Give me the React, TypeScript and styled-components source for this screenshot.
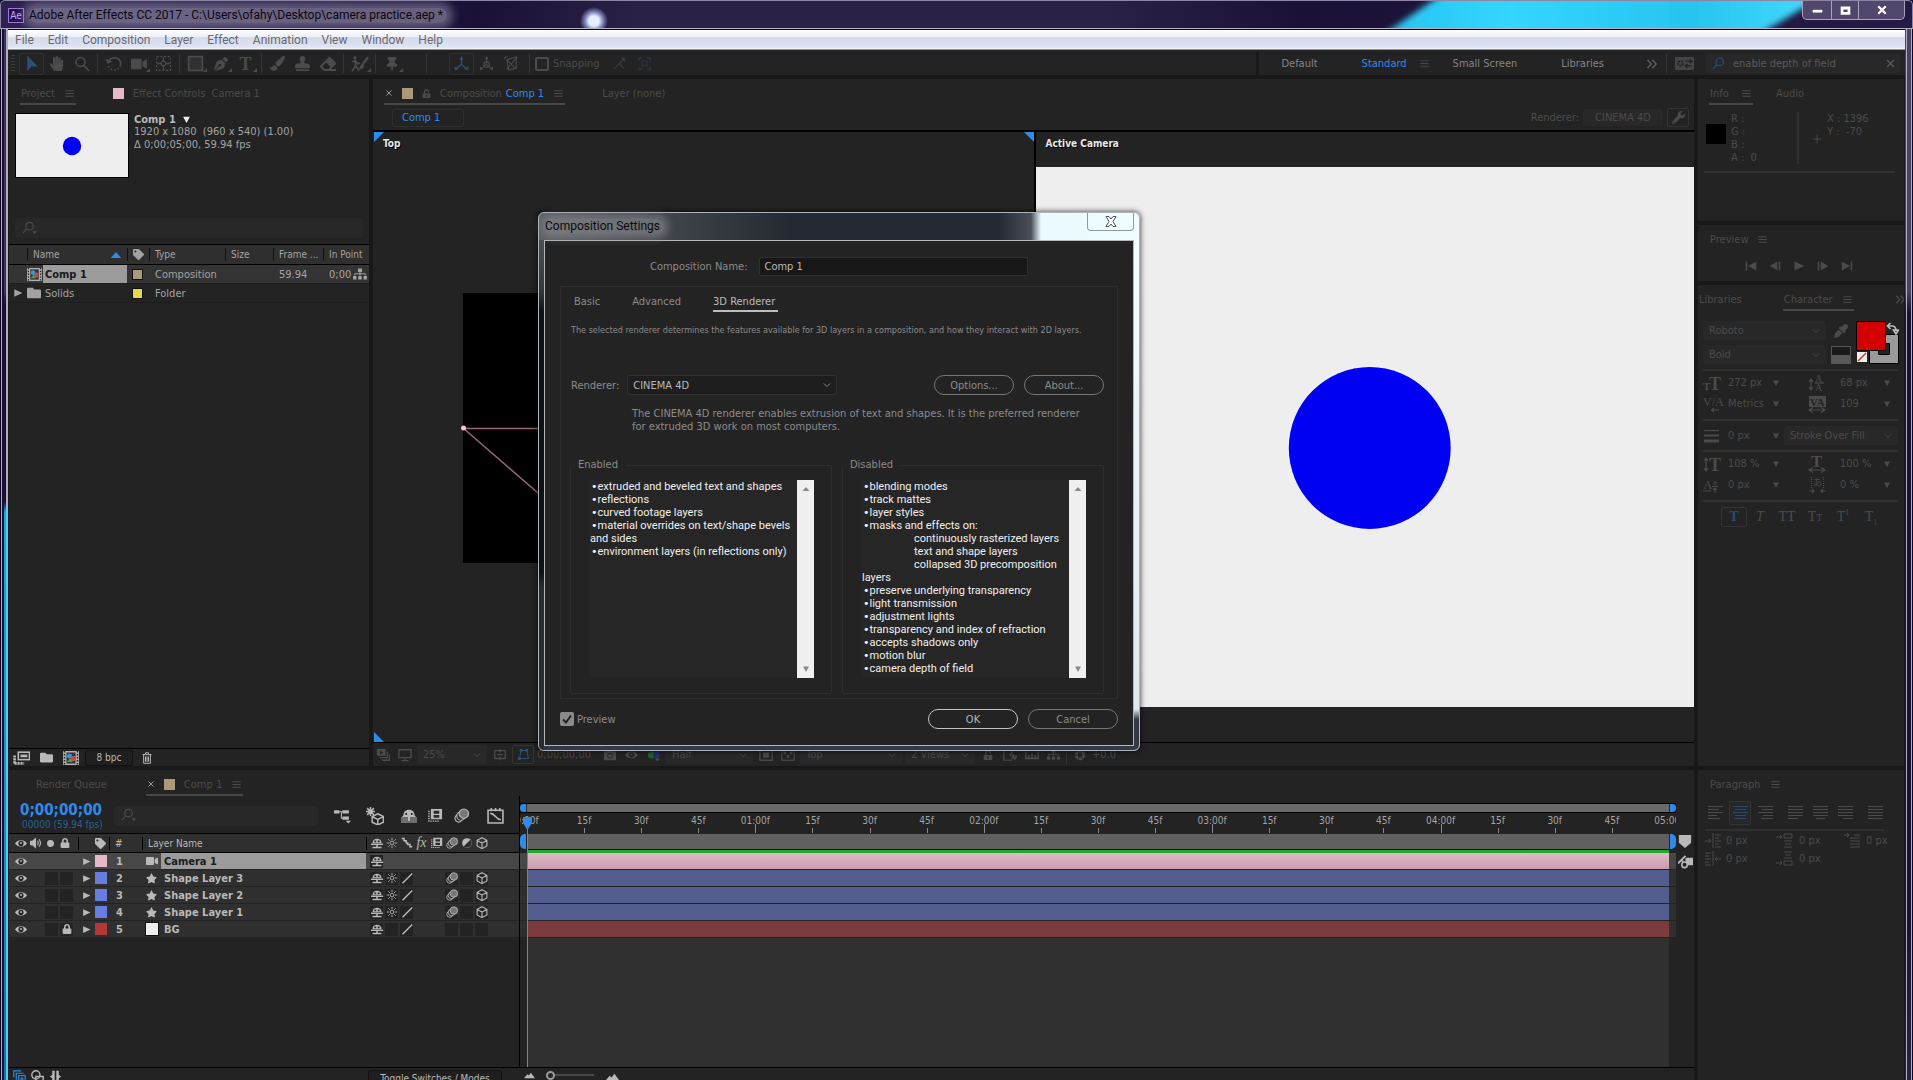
import React from 'react';
import styled, { createGlobalStyle, css } from 'styled-components';
import {
  FaHandPaper, FaPenNib, FaPaintBrush, FaStamp, FaEraser, FaThumbtack, FaVideo, FaWrench,
  FaEyeDropper, FaStar, FaLock, FaUnlockAlt, FaTag, FaFolder, FaCamera, FaSitemap,
} from 'react-icons/fa';

const c = {
  panel: '#232323',
  gap: '#181818',
  raised: '#2f2f2f',
  dim: '#4b4b4b',
  text: '#a3a3a3',
  bright: '#b9b9b9',
  blue: '#2d8ceb',
};

const Global = createGlobalStyle`
  * { box-sizing: border-box; }
  html, body, #root { height: 100%; }
  body { margin: 0; overflow: hidden; background: #120b24; color: ${c.text};
    font: 11px/13px "DejaVu Sans Condensed", "DejaVu Sans", sans-serif; }
  button, input, select { font: inherit; color: inherit; }
  button { background: none; border: 0; padding: 0; }
  svg { display: block; flex: none; }
  table { border-collapse: collapse; table-layout: fixed; }
  td, th { padding: 0; font-weight: inherit; text-align: left; }
  thead { font-weight: normal; }
`;

/* ---------- icons ---------- */

const line = { fill: 'none', stroke: 'currentColor', strokeWidth: 1.2 };
const shapes: Record<string, React.ReactNode> = {
  cursor: <path d="M4 0.5V15l4-4.2h6z" fill="currentColor" />,
  zoom: <g {...line} strokeWidth={1.5}><circle cx="6.5" cy="6" r="4.5" /><path d="M9.7 9.3 15 15" /></g>,
  find: <g {...line}><circle cx="8" cy="5.5" r="4" /><path d="M5 8.5 1 13" /><path d="M11 11h5l-2.5 3z" fill="currentColor" stroke="none" /></g>,
  findBlue: <g {...line} strokeWidth={1.6}><circle cx="9.5" cy="6" r="4.5" /><path d="M6.3 9.2 1.5 14.5" /></g>,
  rotate: <g {...line} strokeWidth={1.5}><path d="M3 7.5A6 6 0 0 1 14.3 6 6 6 0 0 1 14 11" /><path d="M13 12.5A6 6 0 0 1 3 9.5" strokeDasharray="1.5 1.8" /><path d="M.5 3.5 2.5 8.5 7 6z" fill="currentColor" stroke="none" /></g>,
  panBehind: <g {...line}><rect x="1.5" y="1.5" width="13" height="13" strokeDasharray="2 1.5" /><path d="M8 2v12M2 8h12" strokeDasharray="4 4" /><path d="M8 4 6 6.5h4zM8 12 6 9.5h4zM4 8l2.5-2v4zM12 8 9.5 6v4z" fill="currentColor" stroke="none" /></g>,
  rect: <rect x="1.5" y="1.5" width="13" height="13" {...line} strokeWidth={1.6} fill="#303030" />,
  roto: <g {...line} strokeWidth={1.5}><circle cx="3.5" cy="2.5" r="1.5" fill="currentColor" stroke="none" /><path d="M1 6l3-1 2 3 2-1M4 5.5v4l-3 5M4 9l3 5" /><path d="M15 2 10 9" strokeWidth="2" /><path d="M9.5 8.5c-2 1-1.5 3-3 4 2.5.5 5-.5 5-3z" fill="currentColor" stroke="none" /></g>,
  axis: <g {...line} strokeWidth={1.5}><path d="M8 2v7L2 14M8 9l6 5" /><path d="M5.8 4 8 0l2.2 4zM.5 11l.3 4.3L5 14zM15.5 11l-.3 4.3L11 14z" fill="currentColor" stroke="none" /></g>,
  axisWorld: <g {...line}><circle cx="8" cy="9" r="3" /><path d="M8 2v7L2 14M8 9l6 5" /><path d="M6 3.5 8 0l2 3.5zM1 11l0 4L4.5 14zM15 11v4L11.5 14z" fill="currentColor" stroke="none" /></g>,
  axisView: <g {...line}><path d="M3 4l10-3v12l-8 2zM3 4l9 9M1 1l3 0M1 1v3M14 1 3 14" /></g>,
  snapA: <g {...line} strokeWidth={1.5}><path d="M1 15 8 8l5 6M8 8l5-5" /><path d="M9.5 1H15v5.5z" fill="currentColor" stroke="none" /></g>,
  snapB: <g {...line} strokeWidth={1.5}><path d="M1 4V1h4M11 1h4v3M15 12v3h-4M5 15H1v-3" /><rect x="5" y="5" width="6" height="6" strokeDasharray="2 1" /></g>,
  menu: <path d="M2 4h12M2 8h12M2 12h12" {...line} strokeWidth={1.7} />,
  chevron: <path d="M3 5.5 8 10.5l5-5" {...line} strokeWidth={1.5} />,
  more: <path d="M2 2.5 7 8l-5 5.5M8.5 2.5 13.5 8l-5 5.5" {...line} strokeWidth={2} />,
  down: <path d="M2 3h12L8 14z" fill="currentColor" />,
  right: <path d="M2 2v12l13-6z" fill="currentColor" />,
  up: <path d="M1 12 8 4l7 8z" fill="currentColor" />,
  close: <path d="M3 3l10 10M13 3 3 13" {...line} strokeWidth={2} />,
  winClose: <path d="M3 3l10 10M13 3 3 13" {...line} strokeWidth={3} />,
  min: <rect x="1" y="7" width="14" height="4" fill="currentColor" />,
  max: <path d="M1 2h14v12H1zM5 6.5v3.5h6V6.5z" fill="currentColor" fillRule="evenodd" />,
  wsGear: <g><rect width="16" height="11" y="2.5" rx="1" fill="currentColor" /><circle cx="4.5" cy="8" r="2" fill="none" stroke="#232323" strokeWidth="1.5" strokeDasharray="1.6 .6" /><path d="M9 6h5M9 10h5M12.5 4.5 14.5 6l-2 1.5M10.5 8.5 8.5 10l2 1.5" fill="none" stroke="#232323" /></g>,
  prev: <path d="M1 2h2v12H1zM15 2v12L4 8z" fill="currentColor" />,
  stepBack: <path d="M13 2h2v12h-2zM11 2v12L1 8z" fill="currentColor" />,
  play: <path d="M2 2v12l13-6z" fill="currentColor" />,
  stepFwd: <path d="M1 2h2v12H1zM5 2v12l10-6z" fill="currentColor" />,
  next: <path d="M13 2h2v12h-2zM1 2v12l11-6z" fill="currentColor" />,
  eye: <g><path d="M0 8.5C3.5 3 12.5 3 16 8.5 12.5 14 3.5 14 0 8.5z" fill="currentColor" /><circle cx="8" cy="8.5" r="3.4" fill="#252525" /><circle cx="8" cy="8" r="1.3" fill="currentColor" /></g>,
  speaker: <g><path d="M0 5h3l5-4.5v15L3 11H0z" fill="currentColor" /><path d="M10 5q2 3 0 6M12 3q4 5 0 10" {...line} strokeWidth={1.5} /></g>,
  solo: <circle cx="8" cy="8" r="5" fill="currentColor" />,
  shy: <g fill="currentColor"><path d="M2 8C2 .5 14 .5 14 8z" /><path d="M0 8.5h16v2H0zM7 10h2v5H7zM2 13h12v2H2z" /><path d="M4.500 4.500h2.500V7H4.500zM9 4.500h2.500V7H9z" fill="#252525" /></g>,
  shyBar: <g fill="currentColor"><rect y="9" width="16" height="6" opacity=".5" /><path d="M2.500 7C2.500 0 13.500 0 13.500 7l1.500 2H1z" /><path d="M7 5h2v8H7z" /><path d="M4.500 5h1.500v2H4.500zM10 5h1.500v2H10z" fill="#232323" /></g>,
  sun: <g {...line}><circle cx="8" cy="8" r="2.5" /><path d="M8 1v3M8 12v3M1 8h3M12 8h3M3 3l2 2M11 11l2 2M13 3l-2 2M5 11l-2 2" /></g>,
  quality: <path d="M1 2h3v3h3v3h2v2h3v3h3" {...line} strokeWidth={2} />,
  slash: <path d="M2 15 15 2" {...line} strokeWidth={2} />,
  film: <g fill="currentColor"><path d="M3 1h12v11H3z" /><path d="M1 3v11h11" {...line} strokeWidth={1.5} strokeDasharray="1.5 1" /><path d="M6 3h6v3H6zM6 7.5h6v3H6z" fill="#2a2a2a" /></g>,
  motion: <g stroke="currentColor" strokeWidth="1.2"><circle cx="5" cy="11" r="4" fill="#2a2a2a" /><circle cx="7.5" cy="8.5" r="4.5" fill="#2a2a2a" /><circle cx="10.5" cy="6" r="5" fill="#777" /></g>,
  adjust: <g><circle cx="8" cy="8" r="6.5" fill="currentColor" /><path d="M12.5 3.5a6.3 6.3 0 0 1-9 9z" fill="#2a2a2a" /></g>,
  cube: <path d="M8 1 14.5 4.5v7.5L8 15.5 1.5 12V4.5zM1.5 4.5 8 8l6.5-3.5M8 8v7.500" {...line} strokeWidth={1.5} />,
  draft3d: <g {...line} strokeWidth={1.3}><path d="M10.5 6 15.5 8.5v5L10.5 16 5.5 13.5v-5zM5.5 8.5l5 2.5 5-2.5M10.5 11v5" /><path d="M4 0v8M0 4h8M1 1l6 6M7 1 1 7" /></g>,
  flow: <g fill="currentColor"><path d="M0 3h5v3H0zM8 3h6v3H8zM8 9h6v3H8z" /><path d="M4 4h5v1H4zM6.5 4.5h1v6h-1zM6.5 10h2v1h-2zM11 13h5l-2.5 2.5z" /></g>,
  graph: <g {...line} strokeWidth={1.5}><path d="M1 3h14v12H1zM4 1v3M8 1v3M12 1v3" /><path d="M3 6c5 0 5 6 10 6" /></g>,
  marker: <path d="M1 1h14v9l-7 6-7-6z" fill="currentColor" />,
  compMark: <g><path d="M8 4h8v8H8z" fill="currentColor" /><path d="M0 10 8 2M5 7v4" {...line} strokeWidth={2} /><circle cx="7" cy="11.5" r="3" fill="#232323" stroke="currentColor" strokeWidth="1.7" /></g>,
  comp: <g><rect width="16" height="14" y="1" fill="#b0b0b0" /><path d="M1.5 1v14M14.5 1v14" stroke="#222" strokeWidth="1.5" strokeDasharray="1.5 1.5" /><rect x="3.5" y="2.5" width="9" height="11" fill="#333" /><circle cx="6.5" cy="6" r="2.5" fill="#3c93e0" /><rect x="8" y="6" width="4" height="5" fill="#c9493e" /><path d="M4 12l3-4 3 4z" fill="#43a35b" /></g>,
  interpret: <g {...line} strokeWidth={1.5}><rect x="5" y="3" width="10.5" height="7" /><path d="M7 6.5h6.5" strokeWidth="2.5" /><path d="M1.5 6v8M1.5 13.5h9" strokeWidth="2.5" strokeDasharray="2 .8" /></g>,
  trash: <path d="M2 3.5h12M6 3V1h4v2M3.5 3.5v11.5h9V3.500M6 6v7M8 6v7M10 6v7" {...line} strokeWidth={1.3} />,
  layers: <g {...line} strokeWidth={1.4}><path d="M1 9V1h9M4 12V4h9" /><rect x="7" y="7" width="8" height="8" /><path d="M11 9v4M9 11h4" /></g>,
  modes: <g {...line} strokeWidth={1.7}><circle cx="6" cy="6" r="5" /><path d="M6 8h9v7H6z" /></g>,
  braces: <path d="M7 1v14H4v-5L1 8l3-2V1zM9 1v14h3v-5l3-2-3-2V1z" fill="currentColor" />,
  hill: <path d="M0 12 5 6l2 2 3-4 6 8z" fill="currentColor" />,
  monitor: <path d="M1 2h14v9H1zM8 11v3M4 14.5h8" {...line} strokeWidth={1.5} />,
  preview: <g><path d="M1 1h10v8H1z" fill="currentColor" /><path d="M4.5 3v4l4-2z" fill="#232323" /><path d="M13 4v7H4M15.5 7v7H7" {...line} strokeWidth={1.5} /></g>,
  grid: <path d="M2 3h12v9H2zM8 1v4M8 10v4M5 7.5h6" {...line} strokeWidth={1.5} />,
  mask: <path d="M1 13h14M3 13 5 3h7l2 10M2 12h2v2H2zM4 2h2v2H4zM11 2h2v2h-2z" {...line} strokeWidth={1.3} />,
  region: <g><rect x="1" y="2" width="14" height="12" {...line} strokeWidth={1.5} /><rect x="4.5" y="5" width="7" height="6" fill="currentColor" /></g>,
  checker: <g {...line} strokeWidth={1.3}><rect x="1" y="2" width="14" height="12" /><path d="M3 4h3v3H3zM10 4h3v3h-3zM6.5 8h3v3h-3z" fill="currentColor" stroke="none" /></g>,
  rgb: <g><circle cx="5" cy="8" r="4" fill="#23602b" /><circle cx="11" cy="8" r="4" fill="#1f2f73" /><path d="M9 12h6l-3 3z" fill="#4b4b4b" /></g>,
  ruler: <path d="M1 4v8h14V4M4.5 8v4M8 6v6M11.5 8v4" {...line} strokeWidth={1.5} />,
  fast: <path d="M1 2v12h9M1 2h5M13 1 8 8h4l-2 5M11 9h5l-2.5 4z" {...line} strokeWidth={1.4} />,
  aperture: <circle cx="8" cy="8" r="5" {...line} strokeWidth={4} strokeDasharray="4 1.2" />,
  plus: <path d="M8 1v14M1 8h14" {...line} strokeWidth={1.5} />,
};

const Svg = styled.svg<{ $c?: string }>`${p => p.$c && css`color: ${p.$c};`}`;
const Icon = ({ n, s = 12, color }: { n: string; s?: number; color?: string }) => (
  <Svg width={s} height={s} viewBox="0 0 16 16" $c={color} aria-hidden>{shapes[n]}</Svg>
);

const glyph = { fontFamily: '"Liberation Serif", serif', fill: 'currentColor' } as const;
const GlyphBox = styled.svg`overflow: visible;`;
const GlyphSvg = ({ children }: { children: React.ReactNode }) => (
  <GlyphBox width="20" height="18" viewBox="0 0 20 18" aria-hidden>{children}</GlyphBox>
);
const hArrow = (y: number) => <path d={`M2 ${y}h14M5 ${y - 2.5}l-4 2.5 4 2.5M13 ${y - 2.5}l4 2.5-4 2.5`} {...line} />;
const vArrow = (x: number, y1: number, y2: number) => <path d={`M${x} ${y1}V${y2}M${x - 2} ${y1 + 3}l2-3 2 3M${x - 2} ${y2 - 3}l2 3 2-3`} {...line} />;

/* ---------- window chrome ---------- */

const Window = styled.div`
  position: relative;
  display: grid;
  grid-template: 29px minmax(0, 1fr) / 8px minmax(0, 1fr) 8px;
  height: 100vh;
  overflow: hidden;
`;
const TitleBar = styled.header`
  grid-column: 1 / -1;
  position: relative;
  display: flex;
  align-items: flex-start;
  gap: 5px;
  padding: 7px 7px 0 7px;
  border: 1px solid #8e84a6;
  border-bottom-color: #b6b0cc;
  border-radius: 5px 5px 0 0;
  background:
    radial-gradient(circle at 593px 20px, #e4f0ff 0 5px, #7f84b8 9px, transparent 14px),
    linear-gradient(90deg, #2c2150 0, #1b1137 480px, #2a2147 640px, #2a2147 1100px, #1b1137 1300px, #241a43 100%);
  overflow: hidden;
`;
const Wallpaper = styled.svg`position: absolute; top: 0; right: 90px;`;
const AppBadge = styled.span`
  width: 16px; height: 15px;
  border: 1px solid #9a7bd0;
  background: #27104f;
  color: #c9a5ff;
  font: 10px/13px "DejaVu Sans Condensed", sans-serif;
  text-align: center;
`;
const WindowTitle = styled.h1`
  margin: 0;
  padding: 0 4px 0 0;
  border-radius: 8px;
  background: rgba(150, 144, 168, .62);
  box-shadow: 0 0 8px 6px rgba(150, 144, 168, .55);
  color: #0a0712;
  font: 12px/15px Roboto, sans-serif;
`;
const WindowButtons = styled.div`
  position: relative;
  display: flex;
  margin: -7px 0 0 auto;
  border: 1px solid #a9a2bd;
  border-top: 0;
  border-radius: 0 0 5px 5px;
  background: #51476c;
  overflow: hidden;
`;
const WindowButton = styled.button<{ $w: number }>`
  display: grid;
  place-items: center;
  width: ${p => p.$w}px;
  height: 18px;
  color: #fff;
  & + & { border-left: 1px solid #a9a2bd; }
`;
const LeftEdge = styled.div`
  border-left: 1px solid #0c0720;
  background:
    linear-gradient(#b1abc5 0, #b1abc5 45%, #43d2fb 46%) 5px 0 / 2px 100% no-repeat,
    linear-gradient(#b1abc5, #b1abc5) 0 0 / 1px 100% no-repeat,
    linear-gradient(#3b3156 0, #3b3156 25%, #1b1137 26%, #1b1137 45%, #2ba0d5 46%, #1e6fa0) 3px 0 / 2px 100% no-repeat,
    #1b1137;
`;
const RightEdge = styled.div`
  border-right: 1px solid #0c0720;
  background:
    linear-gradient(#b1abc5, #b1abc5) 1px 0 / 1px 100% no-repeat,
    linear-gradient(#b1abc5, #b1abc5) 6px 0 / 1px 100% no-repeat,
    linear-gradient(#4b4166 0, #4b4166 25%, #1b1137 27%, #1b1137 85%, #2a2147 100%);
`;
const Client = styled.div`
  display: flex;
  flex-direction: column;
  min-width: 0;
  background: ${c.gap};
`;
const MenuBar = styled.nav`
  display: flex;
  flex: none;
  align-items: center;
  gap: 14px;
  height: 21px;
  padding: 0 7px;
  border-top: 1px solid #0c0720;
  border-bottom: 1px solid #8f93a5;
  background: linear-gradient(#fff 0, #eef0f8 35%, #d5dbec 40%, #dfe4f4 90%, #f5f6fa 100%);
  color: #6b6b6b;
  font: 12px/18px Roboto, sans-serif;
`;
const MenuItem = styled.button``;

/* ---------- toolbar ---------- */

const ToolBar = styled.div`
  display: flex;
  flex: none;
  align-items: center;
  height: 25px;
  padding: 2px 0 0 2px;
  background: ${c.panel};
  color: ${c.dim};
`;
const Grip = styled.i`
  width: 4px; height: 18px; margin: 0 4px 0 1px;
  background: repeating-linear-gradient(#3a3a3a 0 1px, transparent 1px 3px);
`;
const Tool = styled.button<{ $on?: boolean; $corner?: boolean }>`
  position: relative;
  display: grid;
  place-items: center;
  width: 25px;
  height: 22px;
  border: 1px solid ${p => (p.$on ? '#303030' : 'transparent')};
  border-radius: 2px;
  color: ${p => (p.$on ? '#28507a' : 'inherit')};
  ${p => p.$corner && css`
    &::after { content: ''; position: absolute; right: 0; bottom: 2px; border: 2px solid; border-color: transparent currentColor currentColor transparent; }
  `}
`;
const Sep = styled.i<{ $gap?: number }>`
  width: 1px;
  height: 19px;
  margin: 0 ${p => p.$gap ?? 3}px;
  background: #343434;
`;
const SerifT = styled.span`font: bold 18px/18px "Liberation Serif", serif;`;
const CheckLabel = styled.label`
  display: flex;
  align-items: center;
  gap: 4px;
  margin-right: 7px;
`;
const CheckBox = styled.input`
  appearance: none;
  width: 14px; height: 14px;
  margin: 0;
  border: 2px solid #4b4b4b;
  border-radius: 2px;
  &:checked {
    border: 0;
    background: #8b8b8b url('data:image/svg+xml,<svg xmlns="http://www.w3.org/2000/svg" viewBox="0 0 14 14"><path d="M3 7.5 6 10.5 11 3.5" fill="none" stroke="%23222" stroke-width="2"/></svg>');
  }
`;
const Workspaces = styled.div`
  display: flex;
  align-items: center;
  align-self: stretch;
  margin-left: auto;
  padding-left: 22px;
  border-left: 3px solid ${c.gap};
  color: #858585;
`;
const Workspace = styled.button<{ $on?: boolean; $gap: number }>`
  margin-right: ${p => p.$gap}px;
  color: ${p => (p.$on ? c.blue : 'inherit')};
`;
const WorkspaceMenu = styled.span`margin-right: 23px;`;
const HelpSearch = styled.label`
  display: flex;
  align-items: center;
  gap: 8px;
  width: 194px;
  height: 19px;
  margin: 0 5px 0 12px;
  padding: 0 4px 0 6px;
  border-radius: 2px;
  background: #282828;
  color: #585858;
`;
const BareInput = styled.input`
  flex: 1;
  min-width: 0;
  padding: 0;
  border: 0;
  outline: 0;
  background: none;
`;

/* ---------- panels ---------- */

const Workbench = styled.main`
  flex: 1;
  display: grid;
  grid-template: minmax(0, 1fr) 310px / 360px minmax(0, 1fr) 206px;
  gap: 4px;
  min-height: 0;
  margin: 4px 1px 0;
`;
const Panel = styled.section<{ $wide?: boolean; $h?: number }>`
  display: flex;
  flex-direction: column;
  min-width: 0;
  min-height: 0;
  overflow: hidden;
  background: ${c.panel};
  ${p => p.$wide && css`grid-column: span 2;`}
  ${p => (p.$h ? css`flex: 0 0 ${p.$h}px;` : css`flex: 1;`)}
`;
const SideStack = styled.div`
  display: flex;
  flex-direction: column;
  gap: 4px;
  min-height: 0;
`;
const Tabs = styled.div<{ $pad?: number; $gap?: number }>`
  display: flex;
  flex: none;
  gap: ${p => p.$gap ?? 36}px;
  height: 26px;
  padding-left: ${p => p.$pad ?? 11}px;
`;
const Tab = styled.div<{ $on?: boolean }>`
  display: flex;
  align-items: center;
  gap: 9px;
  padding: 4px 1px 0;
  border-bottom: 2px solid ${p => (p.$on ? '#474747' : 'transparent')};
  color: ${c.dim};
  white-space: nowrap;
`;
const Accent = styled.span`margin-left: -5px; color: ${c.blue};`;
const Swatch = styled.i<{ $c: string; $w?: number; $edge?: boolean }>`
  display: block;
  width: ${p => p.$w ?? 11}px;
  height: ${p => p.$w ?? 11}px;
  background: ${p => p.$c};
  ${p => p.$edge && css`outline: 1px solid #111;`}
`;
const SearchField = styled.label<{ $w?: number }>`
  display: flex;
  align-items: center;
  flex: none;
  ${p => p.$w && css`width: ${p.$w}px;`}
  height: 20px;
  padding-left: 7px;
  border-radius: 2px;
  background: #282828;
  color: ${c.dim};
`;

const Summary = styled.div`
  display: flex;
  gap: 5px;
  padding: 8px 6px 0;
  height: 113px;
  white-space: pre;
`;
const Thumb = styled.svg`border: 1px solid #000; background: #eee;`;
const SummaryName = styled.strong`display: flex; gap: 6px; align-items: center; height: 12px; color: ${c.bright};`;
const ProjectSearch = styled.div`margin: 0 6px 6px;`;
const ProjectTable = styled.table`
  width: 100%;
  thead tr { height: 20px; border-top: 1px solid #000; border-bottom: 1px solid #000; background: ${c.raised}; font-size: 10px; }
  tbody tr { height: 19px; border-bottom: 1px solid #1e1e1e; }
  td, th { white-space: nowrap; overflow: hidden; }
  th + th > div { border-left: 1px solid #111; padding-left: 5px; }
`;
const Cell = styled.div<{ $l?: number; $r?: number; $end?: boolean }>`
  display: flex;
  align-items: center;
  justify-content: ${p => (p.$end ? 'flex-end' : 'flex-start')};
  height: 13px;
  padding: 0 ${p => p.$r ?? 0}px 0 ${p => p.$l ?? 0}px;
`;
const Spread = styled(Cell)`justify-content: space-between;`;
const SelectedRow = styled.tr`background: #343434;`;
const SelectedName = styled.td`background: #9b9b9b; color: #1a1a1a; font-weight: bold;`;
const PanelFoot = styled.div`
  display: flex;
  align-items: center;
  gap: 10px;
  height: 18px;
  margin-top: auto;
  padding: 0 4px;
  border-top: 1px solid #000;
  color: ${c.bright};
`;
const DepthButton = styled.button`
  width: 48px;
  height: 16px;
  margin: 0 -2px 0 -4px;
  border: 1px solid #111;
  border-radius: 2px;
  background: #1f1f1f;
  font-size: 10px;
`;

/* ---------- composition viewer ---------- */

const ViewerBar = styled.div`
  display: flex;
  align-items: center;
  height: 27px;
  padding: 0 5px 0 19px;
  border-bottom: 2px solid #000;
  color: ${c.dim};
`;
const CompChip = styled.button`
  width: 72px;
  height: 18px;
  padding-left: 9px;
  border: 1px solid #2f2f2f;
  border-radius: 2px;
  color: ${c.blue};
  text-align: left;
`;
const RendererLabel = styled.span`margin: 0 4px 0 auto;`;
const Chip = styled.button`width: 80px; height: 17px; margin-right: 4px; border-radius: 2px; background: #282828;`;
const IconFrame = styled.button<{ $on?: boolean }>`
  display: grid;
  place-items: center;
  width: 22px;
  height: 19px;
  border: 1px solid #333;
  border-radius: 2px;
  ${p => p.$on && css`color: #28507a;`}
`;
const Views = styled.div`
  flex: 1;
  display: grid;
  grid-template-columns: 1fr 1fr;
  min-height: 0;
`;
const View = styled.div<{ $div?: boolean }>`
  position: relative;
  display: flex;
  flex-direction: column;
  min-width: 0;
  overflow: hidden;
  ${p => p.$div && css`border-left: 2px solid #000;`}
`;
const ViewLabel = styled.span`
  position: absolute;
  top: 5px;
  left: 10px;
  color: #e8e8e8;
  font-weight: bold;
  font-size: 10px;
  text-shadow: 1px 1px 0 #000;
`;
const Corner = styled.i<{ $at: 'tl' | 'tr' | 'bl' }>`
  position: absolute;
  border: 5px solid transparent;
  ${p => p.$at === 'tl' && css`top: 0; left: 1px; border-top-color: ${c.blue}; border-left-color: ${c.blue};`}
  ${p => p.$at === 'tr' && css`top: 0; right: 0; border-top-color: ${c.blue}; border-right-color: ${c.blue};`}
  ${p => p.$at === 'bl' && css`bottom: 0; left: 1px; border-bottom-color: ${c.blue}; border-left-color: ${c.blue};`}
`;
const CameraFrame = styled.svg`flex: 1; width: 100%; min-height: 0; margin: 35px 0 35px; background: #eee;`;
const ViewerFoot = styled.div`
  display: flex;
  align-items: center;
  gap: 3px;
  height: 24px;
  border-top: 1px solid #000;
  color: ${c.dim};
`;
const FootIcon = styled.button`
  display: grid;
  place-items: center;
  width: 19px;
  height: 19px;
`;
const SelectWrap = styled.span<{ $w?: number; $h: number; $bg: string; $edge?: string }>`
  position: relative;
  display: flex;
  ${p => (p.$w ? css`flex: 0 0 ${p.$w}px; width: ${p.$w}px;` : css`flex: 1;`)}
  height: ${p => p.$h}px;
  border: 1px solid ${p => p.$edge ?? 'transparent'};
  border-radius: 2px;
  background: ${p => p.$bg};
  svg { position: absolute; right: 4px; top: 50%; margin-top: -5px; pointer-events: none; }
`;
const NativeSelect = styled.select`
  appearance: none;
  width: 100%;
  padding: 0 16px 0 5px;
  border: 0;
  background: none;
`;
const Select = ({ value, label, id, w, h = 19, bg = '#282828', edge }: { value: string; label?: string; id?: string; w?: number; h?: number; bg?: string; edge?: string }) => (
  <SelectWrap $w={w} $h={h} $bg={bg} $edge={edge}>
    <NativeSelect id={id} aria-label={label} defaultValue={value}><option>{value}</option></NativeSelect>
    <Icon n="chevron" s={10} />
  </SelectWrap>
);

/* ---------- side panels ---------- */

const InfoBody = styled.div`
  display: grid;
  grid-template-columns: 20px 68px 18px 1fr;
  gap: 5px;
  margin: 6px 9px 0 6px;
  padding: 1px 0 7px 2px;
  border-bottom: 2px solid #303030;
  color: ${c.dim};
`;
const ColorWell = styled.i`width: 20px; height: 20px; margin-top: 12px; background: #000;`;
const Lines = styled.div<{ $rule?: boolean }>`
  white-space: pre;
  ${p => p.$rule && css`border-right: 2px solid #303030;`}
`;
const Cross = styled.div`align-self: start; justify-self: end; padding-top: 22px;`;
const Transport = styled.div`
  display: flex;
  justify-content: center;
  gap: 12px;
  padding: 9px 4px 0 0;
  color: ${c.dim};
`;
const CharBody = styled.div`
  display: flex;
  flex-direction: column;
  padding: 10px 6px 0 5px;
  color: ${c.dim};
`;
const FontArea = styled.div`
  display: grid;
  grid-template-columns: 123px 20px 43px;
  grid-template-rows: 19px 19px;
  gap: 5px 5px;
  justify-items: center;
  align-items: center;
  padding-bottom: 5px;
`;
const BlackWhite = styled.i`width: 20px; height: 18px; border: 1px solid #555; background: linear-gradient(#1a1a1a 50%, #585858 50%);`;
const Wells = styled.svg`grid-area: 1 / 3 / 3 / 4;`;
const Rule = styled.hr`
  flex: none;
  width: 100%;
  height: 2px;
  margin: 0;
  border: 0;
  background: #303030;
`;
const ValueRow = styled.div`
  display: grid;
  grid-template-columns: 25px 44px 12px 24px 32px 43px 1fr;
  align-items: center;
  height: 21px;
  > :nth-child(4) { grid-column: 5; }
`;
const StrokeRow = styled.div`
  display: grid;
  grid-template-columns: 25px 44px 12px 114px;
  align-items: center;
  height: 29px;
`;
const Value = styled.button`text-align: left; white-space: nowrap;`;
const Timecode = styled(Value)`margin-right: 6px;`;
const Group = styled.div`padding: 1px 0 5px;`;
const Styles = styled.div`
  display: grid;
  grid-template-columns: 26px 24px 28px 26px 28px 26px;
  align-items: center;
  gap: 1px;
  padding: 5px 0 0 18px;
`;
const StyleButton = styled.button<{ $on?: boolean; $i?: boolean; $b?: boolean }>`
  height: 20px;
  border: 1px solid ${p => (p.$on ? '#333' : 'transparent')};
  border-radius: 2px;
  color: ${p => (p.$on ? '#244b74' : 'inherit')};
  font: ${p => (p.$i ? 'italic ' : '')}${p => (p.$b ? 'bold ' : '')}14px/16px "Liberation Serif", serif;
  sup, sub { font-size: 8px; line-height: 0; }
  small { font-size: 10px; }
`;
const ParaAligns = styled.div`
  display: flex;
  align-items: center;
  gap: 3px;
  margin: 5px 0 4px 6px;
  color: ${c.dim};
`;
const AlignButton = styled.button<{ $on?: boolean; $gap?: boolean }>`
  display: grid;
  place-items: center;
  width: 22px;
  height: 24px;
  border: 1px solid ${p => (p.$on ? '#333' : 'transparent')};
  border-radius: 2px;
  background: ${p => (p.$on ? '#272727' : 'none')};
  color: ${p => (p.$on ? '#244b74' : 'inherit')};
  ${p => p.$gap && css`margin-left: 5px;`}
`;
const Indents = styled.div`
  display: grid;
  grid-template-columns: 21px 50px 23px 45px 22px 1fr;
  grid-auto-rows: 18px;
  align-items: center;
  margin: 0 20px 0 7px;
  border-top: 2px solid #303030;
  color: ${c.dim};
`;

/* ---------- timeline ---------- */

const TimelineBody = styled.div`flex: 1; display: flex; min-height: 0;`;
const LayerSide = styled.div`flex: 0 0 511px; border-right: 1px solid #000;`;
const Controls = styled.div`
  display: flex;
  align-items: center;
  height: 37px;
  padding: 2px 8px 0 11px;
  color: ${c.bright};
`;
const Clock = styled.div`width: 94px; color: ${c.blue};`;
const Time = styled.button`color: ${c.blue}; font-weight: bold; font-size: 15px; line-height: 17px;`;
const Frames = styled.div`padding-left: 2px; color: #24619c; font-size: 10px; line-height: 11px; white-space: nowrap;`;
const ControlIcons = styled.div`
  display: grid;
  grid-template-columns: 34px 32px 36px 16px 36px 32px;
  place-items: center;
  margin-left: auto;
`;
const LayerTable = styled.table`
  width: 510px;
  thead tr { height: 19px; border-top: 1px solid #000; border-bottom: 1px solid #000; background: ${c.raised}; font-size: 10px; color: ${c.bright}; }
  tbody tr { height: 17px; border-bottom: 1px solid #232323; background: ${c.raised}; color: ${c.bright}; font-weight: bold; }
  tbody tr[aria-selected='true'] { background: #474747; }
  td, th { height: 16px; line-height: 13px; }
`;
const Slot = styled.i<{ $box?: boolean; $bar?: boolean; $l?: number }>`
  display: grid;
  place-items: center;
  width: 13px;
  height: 13px;
  margin-left: ${p => p.$l ?? 0}px;
  font-style: normal;
  ${p => p.$box && css`background: #232323;`}
  ${p => p.$bar && css`border-left: 1px solid #000;`}
`;
const LayerName = styled.td<{ $on?: boolean }>`
  padding-left: 3px;
  ${p => p.$on && css`background: #9b9b9b; color: #1c1c1c;`}
`;
const HeadLabel = styled.span<{ $pad: number }>`
  display: block;
  padding-left: ${p => p.$pad}px;
  border-left: 1px solid #000;
`;
const Fx = styled.em`font: italic 14px/12px "Liberation Serif", serif;`;
const TrackSide = styled.div`
  position: relative;
  flex: 1;
  display: flex;
  flex-direction: column;
  min-width: 0;
  margin-top: 7px;
  overflow: hidden;
`;
const NavBar = styled.div<{ $c: string }>`
  display: flex;
  justify-content: space-between;
  flex: none;
  height: 10px;
  border: solid #000;
  border-width: 1px 0;
  background: linear-gradient(90deg, transparent 7px, ${p => p.$c} 7px calc(100% - 7px), transparent calc(100% - 7px));
`;
const Handle = styled.i<{ $right?: boolean }>`
  width: 6px;
  background: ${c.blue};
  border-radius: ${p => (p.$right ? '0 5px 5px 0' : '5px 0 0 5px')};
`;
const Ruler = styled.div`
  display: flex;
  flex: none;
  height: 20px;
  padding: 0 7px;
`;
const Mark = styled.div<{ $major: boolean; $last?: boolean }>`
  flex: ${p => (p.$last ? '0 0 0' : '1 1 0')};
  display: flex;
  min-width: 0;
  background: linear-gradient(#8a8a8a, #8a8a8a) left bottom / 1px ${p => (p.$major ? 9 : 5)}px no-repeat;
  > span { flex: none; height: 13px; margin-top: 1px; transform: translateX(-50%); font-size: 10px; }
`;
const WorkArea = styled(NavBar)`height: 15px; border: 0; margin-top: 1px;`;
const Cache = styled.i`
  flex: none;
  height: 4px;
  margin: 0 7px;
  border-top: 1px solid #111;
  background: #24a92c;
`;
const Track = styled.div<{ $on?: boolean }>`
  flex: none;
  height: 17px;
  padding: 0 7px;
  border-bottom: 1px solid #232323;
  background: ${p => (p.$on ? '#474747' : c.raised)};
`;
const Bar = styled.div<{ $bg: string }>`height: 16px; background: ${p => p.$bg};`;
const EmptyTracks = styled.div`flex: 1; margin: 0 7px; background: #303030;`;
const Playhead = styled.div`
  position: absolute;
  top: 14px;
  bottom: 0;
  left: 3px;
  width: 9px;
  background: linear-gradient(#4a8ed2, #4a8ed2) 4px 6px / 1px 100% no-repeat;
  svg { color: ${c.blue}; }
`;
const MarkerRail = styled.div`
  flex: 0 0 18px;
  display: flex;
  flex-direction: column;
  align-items: center;
  gap: 6px;
  padding-top: 38px;
  color: ${c.bright};
`;
const TimelineFoot = styled.div`
  display: flex;
  flex: none;
  align-items: flex-start;
  height: 13px;
  padding: 2px 4px 0;
  gap: 4px;
  border-top: 1px solid #000;
  overflow: hidden;
  color: ${c.bright};
`;
const FootLeft = styled.div`display: flex; gap: 5px; flex: 0 0 507px; align-items: flex-start;`;
const ToggleButton = styled.button`
  width: 134px;
  height: 18px;
  margin: 0 18px 0 auto;
  border: 1px solid #111;
  border-radius: 2px;
  background: #1f1f1f;
  font-size: 10px;
  line-height: 12px;
`;
const ZoomRange = styled.input`
  appearance: none;
  width: 48px;
  height: 10px;
  margin: 0 7px;
  background: linear-gradient(#484848, #484848) center / 100% 2px no-repeat;
  &::-webkit-slider-thumb { appearance: none; width: 9px; height: 9px; border: 2px solid #9a9a9a; border-radius: 50%; background: #232323; }
`;

/* ---------- dialog ---------- */

const Dialog = styled.form`
  position: absolute;
  top: 212px;
  left: 538px;
  width: 602px;
  border: 1px solid #aeb4ba;
  border-radius: 6px;
  background: linear-gradient(90deg, #5d6064 0, #252a32 250px, #252a32 460px, #4b5058 492px, #eafaff 502px, #effdff 100%);
  box-shadow: 0 0 5px 1px rgba(0, 0, 0, .6);
`;
const DialogHead = styled.div`
  display: flex;
  justify-content: space-between;
  align-items: flex-start;
  height: 27px;
  padding: 0 5px 0 6px;
`;
const DialogTitle = styled.h2`
  margin: 6px 0 0;
  padding-right: 4px;
  border-radius: 8px;
  background: rgba(140, 142, 145, .55);
  box-shadow: 0 0 7px 5px rgba(140, 142, 145, .5);
  color: #0a0a0a;
  font: 12px/15px Roboto, sans-serif;
`;
const DialogClose = styled.button`
  display: grid;
  place-items: center;
  width: 47px;
  height: 18px;
  border: 1px solid #8f9a9d;
  border-top: 0;
  border-radius: 0 0 4px 4px;
  color: #4a545c;
`;
const DialogEdge = styled.div`
  padding: 0 5px 4px 5px;
  border-radius: 0 0 5px 5px;
  background:
    linear-gradient(#f0ffff 0, #dfeaf0 92%, #333947 94%) right top / 5px 100% no-repeat,
    linear-gradient(#4b4d50 0, #34373c 10%, #101114 14%, #101114 65%, #2a2c30 68%) left top / 5px 100% no-repeat,
    #333947;
`;
const DialogBody = styled.div`
  padding: 16px 15px 16px;
  border: 1px solid #b5b8bb;
  background: ${c.panel};
  color: #8b8b8b;
`;
const NameRow = styled.label`
  display: flex;
  align-items: center;
  gap: 12px;
  margin: 0 90px 10px;
`;
const NameInput = styled.input`
  flex: 1;
  min-width: 0;
  height: 19px;
  padding: 0 4px;
  border: 1px solid #303030;
  border-radius: 2px;
  background: #171717;
  color: #b9b9b9;
`;
const SettingsBox = styled.div`
  padding: 0 13px 4px 9px;
  border: 1px solid #2e2e2e;
`;
const DialogTabs = styled.div`display: flex; gap: 29px; padding-left: 4px; height: 25px;`;
const DialogTab = styled.button<{ $on?: boolean }>`
  padding: 5px 3px 0 0;
  border-bottom: 2px solid ${p => (p.$on ? '#bdbdbd' : 'transparent')};
  color: ${p => (p.$on ? '#b9b9b9' : 'inherit')};
`;
const Note = styled.p`margin: 12px 0 38px 1px; font-size: 9px; line-height: 13px;`;
const RendererRow = styled.div`display: flex; align-items: center; gap: 10px; padding-left: 1px;`;
const RendererPick = styled.label`display: flex; align-items: center; gap: 8px; margin-right: auto; select { color: #b9b9b9; }`;
const Pill = styled.button<{ $w: number; $main?: boolean }>`
  width: ${p => p.$w}px;
  height: 20px;
  border: 1px solid ${p => (p.$main ? '#c4c4c4' : '#757575')};
  border-radius: 10px;
  color: ${p => (p.$main ? '#b9b9b9' : 'inherit')};
`;
const About = styled.p`margin: 12px 14px 25px 62px;`;
const Features = styled.div`display: grid; grid-template-columns: 1fr 1fr; gap: 10px;`;
const FeatureSet = styled.fieldset`
  min-width: 0;
  margin: 0;
  padding: 8px 17px 15px 19px;
  border: 1px solid #2e2e2e;
  border-radius: 2px;
  legend { height: 14px; margin-left: -16px; padding: 0 8px 0 4px; }
`;
const FeatureBox = styled.div`display: flex; height: 198px; background: #262626;`;
const FeatureList = styled.ul`
  flex: 1;
  margin: 0;
  padding: 0;
  list-style: none;
  color: #f0f0f0;
  font: 11px/13px Roboto, sans-serif;
`;
const Feature = styled.li<{ $sub?: boolean }>`
  text-indent: ${p => (p.$sub ? 52 : 1)}px;
  ${p => !p.$sub && css`&::before { content: '•'; font-family: "DejaVu Sans", sans-serif; line-height: 1; }`}
`;
const ScrollRail = styled.div`
  flex: 0 0 17px;
  display: flex;
  flex-direction: column;
  justify-content: space-between;
  align-items: center;
  padding: 5px 0;
  background: #f0f0f0;
  color: #8a8a8a;
`;
const DialogFoot = styled.div`display: flex; align-items: center; gap: 10px; margin-top: 10px;`;
const PreviewCheck = styled.label`display: flex; align-items: center; gap: 3px; margin-right: auto;`;

/* ---------- data ---------- */

const menus = ['File', 'Edit', 'Composition', 'Layer', 'Effect', 'Animation', 'View', 'Window', 'Help'];
const enabled = [
  'extruded and beveled text and shapes', 'reflections', 'curved footage layers',
  'material overrides on text/shape bevels and sides', 'environment layers (in reflections only)',
];
const disabled: [string, boolean?][] = [
  ['blending modes'], ['track mattes'], ['layer styles'], ['masks and effects on:'],
  ['continuously rasterized layers', true], ['text and shape layers', true], ['collapsed 3D precomposition layers', true],
  ['preserve underlying transparency'], ['light transmission'], ['adjustment lights'],
  ['transparency and index of refraction'], ['accepts shadows only'], ['motion blur'], ['camera depth of field'],
];
type LayerKind = 'camera' | 'shape' | 'solid';
const layers: { name: string; kind: LayerKind; color: string; bar: string }[] = [
  { name: 'Camera 1', kind: 'camera', color: '#e4b9c8', bar: 'linear-gradient(#dcbcc6, #cd9aac)' },
  { name: 'Shape Layer 3', kind: 'shape', color: '#677de0', bar: '#535d8e' },
  { name: 'Shape Layer 2', kind: 'shape', color: '#677de0', bar: '#535d8e' },
  { name: 'Shape Layer 1', kind: 'shape', color: '#677de0', bar: '#535d8e' },
  { name: 'BG', kind: 'solid', color: '#b53838', bar: '#7b3a3b' },
];
const marks = Array.from({ length: 21 }, (_, i) =>
  i === 0 ? '0:00f' : i % 4 ? `${(i % 4) * 15}f` : `0${i / 4}:00f`);
const switchHeads = ['shy', 'sun', 'quality', 'fx', 'film', 'motion', 'adjust', 'cube'];
const switchesFor: Record<LayerKind, (string | null)[]> = {
  camera: ['shy', null, null, null, null, null, null, null],
  shape: ['shy', 'sun', 'slash', null, null, 'motion', '', 'cube'],
  solid: ['shy', '', 'slash', null, null, '', '', ''],
};

const TabMenu = () => <Icon n="menu" s={11} />;

const alignPaths: Record<string, number[][]> = {
  left: [[0, 15], [0, 11], [0, 15], [0, 9], [0, 12]],
  center: [[0, 15], [2, 13], [0, 15], [2, 13], [1, 14]],
  right: [[0, 15], [4, 15], [0, 15], [5, 15], [3, 15]],
  jLeft: [[0, 15], [0, 15], [0, 15], [0, 15], [0, 10]],
  jCenter: [[0, 15], [0, 15], [0, 15], [0, 15], [3, 12]],
  jRight: [[0, 15], [0, 15], [0, 15], [0, 15], [5, 15]],
  all: [[0, 15], [0, 15], [0, 15], [0, 15], [0, 15]],
};
const AlignIcon = ({ kind }: { kind: string }) => (
  <svg width="15" height="14" viewBox="0 0 15 14" aria-hidden>
    {alignPaths[kind].map(([a, b], i) => <path key={i} d={`M${a} ${i * 3 + 0.5}H${b}`} stroke="currentColor" />)}
  </svg>
);

/* ---------- sections ---------- */

const Tools = () => (
  <ToolBar>
    <Grip />
    <Tool $on aria-label="Selection"><Icon n="cursor" s={17} /></Tool>
    <Tool aria-label="Hand"><FaHandPaper size={15} /></Tool>
    <Tool aria-label="Zoom"><Icon n="zoom" s={16} /></Tool>
    <Sep />
    <Tool aria-label="Rotation"><Icon n="rotate" s={17} /></Tool>
    <Tool $corner aria-label="Camera"><FaVideo size={16} /></Tool>
    <Tool aria-label="Pan behind"><Icon n="panBehind" s={17} /></Tool>
    <Sep />
    <Tool $corner aria-label="Rectangle"><Icon n="rect" s={17} /></Tool>
    <Tool $corner aria-label="Pen"><FaPenNib size={14} /></Tool>
    <Tool $corner aria-label="Type"><SerifT>T</SerifT></Tool>
    <Sep />
    <Tool aria-label="Brush"><FaPaintBrush size={15} /></Tool>
    <Tool aria-label="Clone stamp"><FaStamp size={15} /></Tool>
    <Tool aria-label="Eraser"><FaEraser size={16} /></Tool>
    <Sep />
    <Tool $corner aria-label="Roto brush"><Icon n="roto" s={18} /></Tool>
    <Sep />
    <Tool $corner aria-label="Puppet pin"><FaThumbtack size={14} /></Tool>
    <Sep $gap={22} />
    <Tool $on aria-label="Local axis"><Icon n="axis" s={15} /></Tool>
    <Tool aria-label="World axis"><Icon n="axisWorld" s={15} /></Tool>
    <Tool aria-label="View axis"><Icon n="axisView" s={15} /></Tool>
    <Sep $gap={5} />
    <CheckLabel><CheckBox type="checkbox" />Snapping</CheckLabel>
    <Tool aria-label="Snap edges"><Icon n="snapA" s={13} color="#3a3a3a" /></Tool>
    <Tool aria-label="Snap features"><Icon n="snapB" s={13} color="#263b50" /></Tool>
    <Workspaces>
      <Workspace $gap={44}>Default</Workspace>
      <Workspace $on $gap={12}>Standard</Workspace>
      <WorkspaceMenu><Icon n="menu" s={11} color="#3b4a58" /></WorkspaceMenu>
      <Workspace $gap={44}>Small Screen</Workspace>
      <Workspace $gap={42}>Libraries</Workspace>
      <Icon n="more" s={12} color="#5a5a5a" />
      <Sep $gap={8} />
      <Icon n="wsGear" s={19} color="#454545" />
      <HelpSearch>
        <Icon n="findBlue" s={13} color="#244b74" />
        <BareInput aria-label="Search Help" defaultValue="enable depth of field" />
        <Icon n="close" s={11} />
      </HelpSearch>
    </Workspaces>
  </ToolBar>
);

const ProjectPanel = () => (
  <Panel>
    <Tabs>
      <Tab $on>Project<TabMenu /></Tab>
      <Tab><Swatch $c="#e4b9c8" />Effect Controls&nbsp; Camera 1</Tab>
    </Tabs>
    <Summary>
      <Thumb width="114" height="65" viewBox="0 0 114 65"><circle cx="57" cy="33" r="9.5" fill="#0000f2" /></Thumb>
      <div>
        <SummaryName>Comp 1<Icon n="down" s={9} color="#eee" /></SummaryName>
        1920 x 1080&nbsp; (960 x 540) (1.00)<br />Δ 0;00;05;00, 59.94 fps
      </div>
    </Summary>
    <ProjectSearch><SearchField><Icon n="find" s={15} /><BareInput aria-label="Search project" /></SearchField></ProjectSearch>
    <ProjectTable>
      <colgroup><col width="18" /><col width="16" /><col width="84" /><col width="22" /><col width="76" /><col width="48" /><col width="50" /><col /></colgroup>
      <thead>
        <tr>
          <th /><th colSpan={2}><Spread $r={5}>Name<Icon n="up" s={12} color={c.blue} /></Spread></th>
          <th><Cell><FaTag size={11} /></Cell></th><th><Cell>Type</Cell></th><th><Cell>Size</Cell></th>
          <th><Cell>Frame ...</Cell></th><th><Cell>In Point</Cell></th>
        </tr>
      </thead>
      <tbody>
        <SelectedRow>
          <td /><td><Icon n="comp" s={15} /></td><SelectedName><Cell $l={2}>Comp 1</Cell></SelectedName>
          <td><Cell $l={4}><Slot><Swatch $c="#aa9a7a" $w={9} $edge /></Slot></Cell></td><td><Cell $l={6}>Composition</Cell></td><td />
          <td><Cell $l={6}>59.94</Cell></td><td><Spread $l={6} $r={2}>0;00<FaSitemap size={14} /></Spread></td>
        </SelectedRow>
        <tr>
          <td><Cell $l={4}><Icon n="right" s={10} /></Cell></td><td><FaFolder size={14} /></td><td><Cell $l={2}>Solids</Cell></td>
          <td><Cell $l={4}><Slot><Swatch $c="#e4d84c" $w={9} $edge /></Slot></Cell></td><td><Cell $l={6}>Folder</Cell></td><td /><td /><td />
        </tr>
      </tbody>
    </ProjectTable>
    <PanelFoot>
      <Icon n="interpret" s={17} /><FaFolder size={13} /><Icon n="comp" s={16} />
      <DepthButton>8 bpc</DepthButton><Icon n="trash" s={12} />
    </PanelFoot>
  </Panel>
);

const ViewerPanel = () => (
  <Panel>
    <Tabs>
      <Tab $on>
        <Icon n="close" s={8} color="#9a9a9a" /><Swatch $c="#aa9a7a" /><FaUnlockAlt size={9} />
        Composition<Accent>Comp 1</Accent><TabMenu />
      </Tab>
      <Tab>Layer (none)</Tab>
    </Tabs>
    <ViewerBar>
      <CompChip>Comp 1</CompChip>
      <RendererLabel>Renderer:</RendererLabel>
      <Chip>CINEMA 4D</Chip>
      <IconFrame aria-label="Renderer options"><FaWrench size={13} /></IconFrame>
    </ViewerBar>
    <Views>
      <View>
        <svg width="660" height="611" viewBox="0 0 660 611" aria-hidden>
          <rect x="90" y="161" width="480" height="270" fill="#000" />
          <path d="M90 296.500H330M90 296l240 208" stroke="#9b6472" strokeWidth="1.5" fill="none" />
          <circle cx="90.5" cy="296" r="2.5" fill="#f1c6d2" />
        </svg>
        <ViewLabel>Top</ViewLabel>
        <Corner $at="tl" /><Corner $at="tr" /><Corner $at="bl" />
      </View>
      <View $div>
        <ViewLabel>Active Camera</ViewLabel>
        <CameraFrame viewBox="0 0 659 540" aria-hidden><circle cx="334" cy="281" r="81" fill="#0000f2" /></CameraFrame>
      </View>
    </Views>
    <ViewerFoot>
      <FootIcon aria-label="Always preview this view"><Icon n="preview" s={14} /></FootIcon>
      <FootIcon aria-label="Primary viewer"><Icon n="monitor" s={14} /></FootIcon>
      <Select value="25%" label="Magnification" w={70} />
      <FootIcon aria-label="Guides"><Icon n="grid" s={14} /></FootIcon>
      <IconFrame $on aria-label="Masks"><Icon n="mask" s={13} /></IconFrame>
      <Timecode>0;00;00;00</Timecode>
      <FootIcon aria-label="Snapshot"><FaCamera size={12} /></FootIcon>
      <FootIcon aria-label="Show snapshot"><Icon n="eye" s={13} /></FootIcon>
      <FootIcon aria-label="Channels"><Icon n="rgb" s={14} /></FootIcon>
      <Select value="Half" label="Resolution" w={87} />
      <FootIcon aria-label="Region of interest"><Icon n="region" s={14} /></FootIcon>
      <FootIcon aria-label="Transparency grid"><Icon n="checker" s={14} /></FootIcon>
      <Select value="Top" label="3D view" w={102} />
      <Select value="2 Views" label="View layout" w={70} />
      <FootIcon aria-label="Share view options"><FaUnlockAlt size={10} /></FootIcon>
      <FootIcon aria-label="Fast previews"><Icon n="fast" s={14} /></FootIcon>
      <FootIcon aria-label="Timeline"><Icon n="ruler" s={14} /></FootIcon>
      <FootIcon aria-label="Flowchart"><FaSitemap size={13} /></FootIcon>
      <Sep $gap={0} />
      <FootIcon aria-label="Reset exposure"><Icon n="aperture" s={12} /></FootIcon>
      <Value>+0.0</Value>
    </ViewerFoot>
  </Panel>
);

const Down = () => <Icon n="down" s={8} />;

const SidePanels = () => (
  <SideStack>
    <Panel $h={142}>
      <Tabs $gap={22}><Tab $on>Info&nbsp;<TabMenu /></Tab><Tab>Audio</Tab></Tabs>
      <InfoBody>
        <ColorWell />
        <Lines $rule>{'R :\nG :\nB :\nA :  0'}</Lines>
        <Cross><Icon n="plus" s={10} /></Cross>
        <Lines>{'X : 1396\nY :  -70'}</Lines>
      </InfoBody>
    </Panel>
    <Panel $h={56}>
      <Tabs><Tab>Preview<TabMenu /></Tab></Tabs>
      <Transport>{['prev', 'stepBack', 'play', 'stepFwd', 'next'].map(n => <button key={n} aria-label={n}><Icon n={n} s={12} /></button>)}</Transport>
    </Panel>
    <Panel>
      <Tabs $pad={0} $gap={40}><Tab>Libraries</Tab><Tab $on>Character<TabMenu /></Tab><Tab><Icon n="more" s={11} /></Tab></Tabs>
      <CharBody>
        <FontArea>
          <Select value="Roboto" label="Font family" w={123} /><FaEyeDropper size={14} />
          <Wells width="43" height="43" viewBox="0 0 43 43" aria-hidden>
            <path d="M13.5 13.5h29v29h-29zM22.5 22.5v11h11v-11z" fill="#9a9a9a" fillRule="evenodd" stroke="#000" />
            <rect x=".5" y=".5" width="29" height="29" fill="#d20000" stroke="#000" />
            <rect x="1" y="31" width="10" height="10" fill="#eee" /><path d="m2 40 8-8" stroke="#c33" strokeWidth="1.5" />
            <path d="M32 5h4q4 0 4 5M34.5 2 31.5 5l3 3M37.5 9h5L40 13z" fill="none" stroke="#bbb" strokeWidth="1.7" />
          </Wells>
          <Select value="Bold" label="Font style" w={123} /><BlackWhite />
        </FontArea>
        <Rule />
        <Group>
          <ValueRow>
            <GlyphSvg><text x="0" y="16" fontSize="11" fontWeight="bold" {...glyph}>T</text><text x="6" y="16" fontSize="18" fontWeight="bold" {...glyph}>T</text></GlyphSvg>
            <Value>272 px</Value><Down />
            <GlyphSvg>{vArrow(3, 5, 16)}<text x="7" y="8" fontSize="10" {...glyph}>A</text><text x="7" y="17" fontSize="10" {...glyph}>A</text><path d="M7 9h9" {...line} /></GlyphSvg>
            <Value>68 px</Value><Down />
          </ValueRow>
          <ValueRow>
            <GlyphSvg><text x="0" y="11" fontSize="12" {...glyph}>V/A</text><path d="M16 15H9M11 13l-2.5 2 2.5 2" {...line} /></GlyphSvg>
            <Value>Metrics</Value><Down />
            <GlyphSvg><rect x="1" y="1" width="17" height="11" fill="currentColor" /><text x="2" y="11" fontSize="11" fontWeight="bold" fontFamily="Liberation Serif, serif" fill="#232323">VA</text>{hArrow(15)}</GlyphSvg>
            <Value>109</Value><Down />
          </ValueRow>
        </Group>
        <Rule />
        <StrokeRow>
          <GlyphSvg><path d="M1 3.5h15" {...line} /><path d="M1 8.5h15" {...line} strokeWidth={2} /><path d="M1 14h15" {...line} strokeWidth={3} /></GlyphSvg>
          <Value>0 px</Value><Down />
          <Select value="Stroke Over Fill" label="Stroke order" />
        </StrokeRow>
        <Rule />
        <Group>
          <ValueRow>
            <GlyphSvg>{vArrow(3, 3, 16)}<text x="6" y="16" fontSize="18" fontWeight="bold" {...glyph}>T</text></GlyphSvg>
            <Value>108 %</Value><Down />
            <GlyphSvg><text x="3" y="12" fontSize="17" fontWeight="bold" {...glyph}>T</text>{hArrow(15)}</GlyphSvg>
            <Value>100 %</Value><Down />
          </ValueRow>
          <ValueRow>
            <GlyphSvg><text x="0" y="13" fontSize="13" {...glyph}>A</text><text x="10" y="9" fontSize="9" {...glyph}>a</text><path d="M0 15h8M9 10.5h6M12 17v-5M10 14l2-2 2 2" {...line} /></GlyphSvg>
            <Value>0 px</Value><Down />
            <GlyphSvg><path d="M3.5 1v11M15.5 1v11" {...line} strokeDasharray="1 1" /><text x="5" y="10" fontSize="9" fontFamily="Noto Sans CJK JP, sans-serif" fill="currentColor">あ</text><path d="M1 15h5M4 13l2 2-2 2M18 15h-5M15 13l-2 2 2 2" {...line} /></GlyphSvg>
            <Value>0 %</Value><Down />
          </ValueRow>
        </Group>
        <Rule />
        <Styles>
          <StyleButton $on $b>T</StyleButton><StyleButton $i>T</StyleButton><StyleButton>TT</StyleButton>
          <StyleButton>T<small>T</small></StyleButton><StyleButton>T<sup>1</sup></StyleButton><StyleButton>T<sub>1</sub></StyleButton>
        </Styles>
      </CharBody>
    </Panel>
  </SideStack>
);

const indentIcon = (k: number) => (
  <svg width="17" height="15" viewBox="0 0 17 15" aria-hidden>
    {k === 0 && <path d="M8 0v15M10 2h6M10 5h4M10 8h6M10 11h4M10 14h6M0 8h6M4 6l2 2-2 2" {...line} strokeWidth={1} />}
    {k === 1 && <path d="M8 1h8v4H8zM8 8h8M9 11h6M8 14h8M0 4h6M4 2l2 2-2 2" {...line} strokeWidth={1} />}
    {k === 2 && <path d="M10 2h6M6 5h10M6 8h10M6 11h10M6 14h10M0 2h5M3 0l2 2-2 2" {...line} strokeWidth={1} />}
    {k === 3 && <path d="M8 0v15M0 2h6M0 5h4M0 8h6M0 11h4M0 14h6M16 8h-6M12 6l-2 2 2 2" {...line} strokeWidth={1} />}
    {k === 4 && <path d="M8 10h8v4H8zM8 1h8M9 4h6M8 7h8M0 12h6M4 10l2 2-2 2" {...line} strokeWidth={1} />}
  </svg>
);

const ParagraphPanel = () => (
  <Panel>
    <Tabs><Tab>Paragraph<TabMenu /></Tab></Tabs>
    <ParaAligns>
      {Object.keys(alignPaths).map(k => (
        <AlignButton key={k} aria-label={k} $on={k === 'center'} $gap={k === 'jLeft' || k === 'all'}><AlignIcon kind={k} /></AlignButton>
      ))}
    </ParaAligns>
    <Indents>
      {[0, 1, 2, 3, 4].map(k => <React.Fragment key={k}>{indentIcon(k)}<Value>0 px</Value></React.Fragment>)}
    </Indents>
  </Panel>
);

const LayerIcon = ({ kind }: { kind: LayerKind }) =>
  kind === 'camera' ? <FaVideo size={12} /> : kind === 'shape' ? <FaStar size={11} /> : <Swatch $c="#eee" $w={12} $edge />;

const Timeline = () => (
  <Panel $wide>
    <Tabs $pad={26} $gap={38}>
      <Tab>Render Queue</Tab>
      <Tab $on><Icon n="close" s={8} color="#9a9a9a" /><Swatch $c="#aa9a7a" />Comp 1<TabMenu /></Tab>
    </Tabs>
    <TimelineBody>
      <LayerSide>
        <Controls>
          <Clock><Time>0;00;00;00</Time><Frames>00000 (59.94 fps)</Frames></Clock>
          <SearchField $w={204}><Icon n="find" s={15} /><BareInput aria-label="Search layers" /></SearchField>
          <ControlIcons>
            <Icon n="flow" s={17} /><Icon n="draft3d" s={18} /><Icon n="shyBar" s={16} />
            <Icon n="film" s={15} /><Icon n="motion" s={15} /><Icon n="graph" s={17} />
          </ControlIcons>
        </Controls>
        <LayerTable>
          <colgroup>
            <col width="6" /><col width="15" /><col width="15" /><col width="15" /><col width="18" /><col width="17" /><col width="14" /><col width="33" /><col width="19" /><col width="205" />
            <col width="4" />{switchHeads.map(s => <col key={s} width="15" />)}<col />
          </colgroup>
          <thead>
            <tr>
              <th /><th><Icon n="eye" s={12} /></th><th><Icon n="speaker" s={12} /></th><th><Icon n="solo" s={11} /></th><th><FaLock size={10} /></th>
              <th><Slot $bar /></th><th><FaTag size={11} /></th><th><HeadLabel $pad={5}>#</HeadLabel></th>
              <th colSpan={2}><HeadLabel $pad={5}>Layer Name</HeadLabel></th><th><Slot $bar /></th>
              {switchHeads.map(s => <th key={s}><Slot>{s === 'fx' ? <Fx>fx</Fx> : <Icon n={s} s={12} />}</Slot></th>)}
              <th />
            </tr>
          </thead>
          <tbody>
            {layers.map((l, i) => (
              <tr key={l.name} aria-selected={i === 0}>
                <td /><td><Icon n="eye" s={12} /></td><td /><td><Slot $box={i > 0} /></td>
                <td><Slot $box={i > 0}>{l.kind === 'solid' && <FaLock size={10} />}</Slot></td>
                <td><Cell $end $r={4}><Icon n="right" s={9} /></Cell></td><td><Swatch $c={l.color} $w={12} /></td><td><Cell $l={7}>{i + 1}</Cell></td>
                <td><Slot $l={3}><LayerIcon kind={l.kind} /></Slot></td><LayerName $on={i === 0}>{l.name}</LayerName><td />
                {switchesFor[l.kind].map((s, k) => <td key={k}><Slot $box={s !== null}>{s && <Icon n={s} s={12} />}</Slot></td>)}
                <td />
              </tr>
            ))}
          </tbody>
        </LayerTable>
      </LayerSide>
      <TrackSide>
        <NavBar $c="#6a6a6a"><Handle /><Handle $right /></NavBar>
        <Ruler>{marks.map((m, i) => <Mark key={i} $major={i % 4 === 0} $last={i === 20}><span>{m}</span></Mark>)}</Ruler>
        <WorkArea $c="#606060"><Handle /><Handle $right /></WorkArea>
        <Cache />
        {layers.map((l, i) => <Track key={l.name} $on={i === 0}><Bar $bg={l.bar} /></Track>)}
        <EmptyTracks />
        <Playhead><svg width="9" height="13" viewBox="0 0 9 13" aria-hidden><path d="M0 0h9v6L4.5 13 0 6z" fill="currentColor" /></svg></Playhead>
      </TrackSide>
      <MarkerRail><Icon n="marker" s={14} /><Icon n="compMark" s={15} /></MarkerRail>
    </TimelineBody>
    <TimelineFoot>
      <FootLeft>
        <Icon n="layers" s={13} color={c.blue} /><Icon n="modes" s={13} /><Icon n="braces" s={13} />
        <ToggleButton>Toggle Switches / Modes</ToggleButton>
      </FootLeft>
      <Icon n="hill" s={11} /><ZoomRange type="range" min="0" max="100" defaultValue="0" aria-label="Timeline zoom" /><Icon n="hill" s={15} />
    </TimelineFoot>
  </Panel>
);

const Rail = () => <ScrollRail><Icon n="up" s={8} /><Icon n="down" s={8} /></ScrollRail>;

const CompositionSettings = () => (
  <Dialog onSubmit={e => e.preventDefault()} aria-label="Composition Settings">
    <DialogHead>
      <DialogTitle>Composition Settings</DialogTitle>
      <DialogClose type="button" aria-label="Close">
        <svg width="12" height="11" viewBox="0 0 12 11"><path d="M1 .5h3l2 2.5L8 .5h3L8 5.5l3 5H8L6 8l-2 2.5H1l3-5z" fill="#fff" stroke="currentColor" /></svg>
      </DialogClose>
    </DialogHead>
    <DialogEdge>
      <DialogBody>
        <NameRow>Composition Name:<NameInput defaultValue="Comp 1" /></NameRow>
        <SettingsBox>
          <DialogTabs>
            <DialogTab type="button">Basic</DialogTab><DialogTab type="button">Advanced</DialogTab><DialogTab type="button" $on>3D Renderer</DialogTab>
          </DialogTabs>
          <Note>The selected renderer determines the features available for 3D layers in a composition, and how they interact with 2D layers.</Note>
          <RendererRow>
            <RendererPick htmlFor="renderer">Renderer:<Select id="renderer" value="CINEMA 4D" w={210} h={20} bg="#1e1e1e" edge="#303030" /></RendererPick>
            <Pill type="button" $w={80}>Options...</Pill><Pill type="button" $w={80}>About...</Pill>
          </RendererRow>
          <About>The CINEMA 4D renderer enables extrusion of text and shapes. It is the preferred renderer for extruded 3D work on most computers.</About>
          <Features>
            <FeatureSet>
              <legend>Enabled</legend>
              <FeatureBox><FeatureList>{enabled.map(t => <Feature key={t}>{t}</Feature>)}</FeatureList><Rail /></FeatureBox>
            </FeatureSet>
            <FeatureSet>
              <legend>Disabled</legend>
              <FeatureBox><FeatureList>{disabled.map(([t, sub]) => <Feature key={t} $sub={sub}>{t}</Feature>)}</FeatureList><Rail /></FeatureBox>
            </FeatureSet>
          </Features>
        </SettingsBox>
        <DialogFoot>
          <PreviewCheck><CheckBox type="checkbox" defaultChecked />Preview</PreviewCheck>
          <Pill $w={90} $main>OK</Pill><Pill type="button" $w={90}>Cancel</Pill>
        </DialogFoot>
      </DialogBody>
    </DialogEdge>
  </Dialog>
);

export default function App() {
  return (
    <>
      <Global />
      <Window>
        <TitleBar>
          <Wallpaper width="440" height="28" viewBox="0 0 440 28" aria-hidden>
            <defs>
              <filter id="soft"><feGaussianBlur stdDeviation="3" /></filter>
              <linearGradient id="sky"><stop offset="0" stopColor="#25c3ef" /><stop offset=".3" stopColor="#33d6ff" /><stop offset=".7" stopColor="#27c4ef" /><stop offset="1" stopColor="#45dcff" /></linearGradient>
            </defs>
            <path d="M-8 40 62-8H446L366 40z" fill="url(#sky)" filter="url(#soft)" />
          </Wallpaper>
          <AppBadge>Ae</AppBadge>
          <WindowTitle>Adobe After Effects CC 2017 - C:\Users\ofahy\Desktop\camera practice.aep *</WindowTitle>
          <WindowButtons>
            <WindowButton $w={28} aria-label="Minimize"><Icon n="min" s={11} /></WindowButton>
            <WindowButton $w={27} aria-label="Maximize"><Icon n="max" s={11} /></WindowButton>
            <WindowButton $w={46} aria-label="Close"><Icon n="winClose" s={12} /></WindowButton>
          </WindowButtons>
        </TitleBar>
        <LeftEdge />
        <Client>
          <MenuBar>{menus.map(m => <MenuItem key={m}>{m}</MenuItem>)}</MenuBar>
          <Tools />
          <Workbench>
            <ProjectPanel />
            <ViewerPanel />
            <SidePanels />
            <Timeline />
            <ParagraphPanel />
          </Workbench>
        </Client>
        <RightEdge />
        <CompositionSettings />
      </Window>
    </>
  );
}
